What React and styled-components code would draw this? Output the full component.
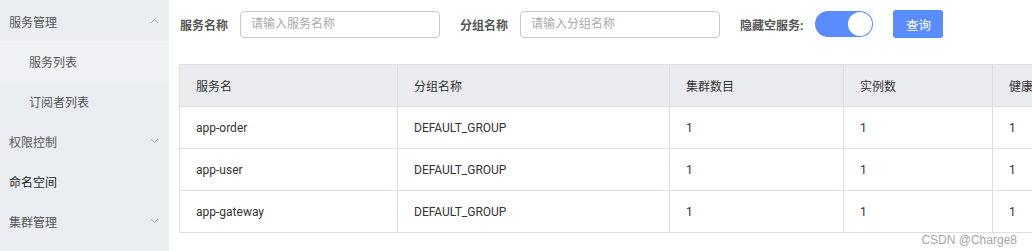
import styled, { createGlobalStyle } from "styled-components";

const GlobalStyle = createGlobalStyle`
  html, body {
    margin: 0;
    padding: 0;
    overflow: hidden;
    background: #fff;
    font-family: Roboto, "Noto Sans CJK SC", sans-serif;
    font-size: 12px;
    color: #333;
  }
`;

const Page = styled.div`
  position: relative;
  display: flex;
  width: 100vw;
  height: 100vh;
  overflow: hidden;
`;

const Sidebar = styled.aside`
  flex: 0 0 169px;
  background: #eaedf1;
  padding-top: 1px;
  box-sizing: border-box;
`;

const MenuItem = styled.div`
  display: flex;
  align-items: center;
  justify-content: space-between;
  height: 40px;
  padding: 0 10px 0 ${({ $sub }) => ($sub ? "29px" : "9px")};
  background: ${({ $active }) => ($active ? "#f0f2f5" : "transparent")};
  color: ${({ $strong }) => ($strong ? "#1f1f1f" : "#555")};
  font-size: 12px;
`;

const Chevron = ({ up }) => (
  <svg width="9" height="6" viewBox="0 0 9 6">
    <polyline
      points={up ? "1,5 4.5,1.5 8,5" : "1,1 4.5,4.5 8,1"}
      fill="none"
      stroke="#9aa0aa"
      strokeWidth="1"
    />
  </svg>
);

const Main = styled.main`
  flex: 1;
  min-width: 0;
  padding: 10px 0 0 10px;
  overflow: hidden;
`;

const SearchBar = styled.div`
  display: flex;
  align-items: center;
  height: 28px;
`;

const Label = styled.span`
  font-weight: bold;
  color: #555;
  margin: 0 12px 0 1px;
  white-space: nowrap;
`;

const Input = styled.input`
  box-sizing: border-box;
  width: 200px;
  height: 27px;
  border: 1px solid #c8cad2;
  border-radius: 4px;
  padding: 0 10px;
  margin-right: 19px;
  font-family: inherit;
  font-size: 12px;
  outline: none;

  &::placeholder {
    color: #aaa;
  }
`;

const Switch = styled.div`
  position: relative;
  width: 58px;
  height: 26px;
  border-radius: 13px;
  background: #5b8cff;
  margin-right: 20px;

  &::after {
    content: "";
    position: absolute;
    top: 1px;
    right: 1px;
    width: 24px;
    height: 24px;
    border-radius: 50%;
    background: #fff;
  }
`;

const Button = styled.button`
  width: 50px;
  height: 28px;
  border: none;
  border-radius: 3px;
  background: #5a8cff;
  color: #fff;
  font-family: inherit;
  font-size: 12.5px;
  padding: 0;
`;

const Table = styled.table`
  margin-top: 26px;
  border-collapse: collapse;
  table-layout: fixed;
  width: 1000px;
  border: 1px solid #dcdfe6;
`;

const Th = styled.th`
  height: 41px;
  padding: 0 16px;
  background: #eaecf0;
  border: 1px solid #dcdfe6;
  text-align: left;
  font-weight: normal;
  color: #333;
  white-space: nowrap;
  overflow: hidden;
`;

const Td = styled.td`
  height: 41px;
  padding: 0 16px;
  border: 1px solid #dcdfe6;
  color: #333;
  white-space: nowrap;
  overflow: hidden;
`;

const Watermark = styled.div`
  position: absolute;
  right: 15px;
  bottom: 4px;
  font-family: "Liberation Sans", sans-serif;
  font-size: 12px;
  color: #a6a6a6;
  text-shadow: 0 0 1px #fff;
`;

const columns = [
  { title: "服务名", width: 218 },
  { title: "分组名称", width: 272 },
  { title: "集群数目", width: 174 },
  { title: "实例数", width: 149 },
  { title: "健康实例数", width: 187 },
];

const rows = [
  ["app-order", "DEFAULT_GROUP", "1", "1", "1"],
  ["app-user", "DEFAULT_GROUP", "1", "1", "1"],
  ["app-gateway", "DEFAULT_GROUP", "1", "1", "1"],
];

export default function App() {
  return (
    <>
      <GlobalStyle />
      <Page>
        <Sidebar>
          <MenuItem>
            <span>服务管理</span>
            <Chevron up />
          </MenuItem>
          <MenuItem $sub $active>
            <span>服务列表</span>
          </MenuItem>
          <MenuItem $sub>
            <span>订阅者列表</span>
          </MenuItem>
          <MenuItem>
            <span>权限控制</span>
            <Chevron />
          </MenuItem>
          <MenuItem $strong>
            <span>命名空间</span>
          </MenuItem>
          <MenuItem>
            <span>集群管理</span>
            <Chevron />
          </MenuItem>
        </Sidebar>
        <Main>
          <SearchBar>
            <Label>服务名称</Label>
            <Input placeholder="请输入服务名称" />
            <Label>分组名称</Label>
            <Input placeholder="请输入分组名称" />
            <Label>隐藏空服务:</Label>
            <Switch />
            <Button>查询</Button>
          </SearchBar>
          <Table>
            <colgroup>
              {columns.map((c) => (
                <col key={c.title} style={{ width: c.width }} />
              ))}
            </colgroup>
            <thead>
              <tr>
                {columns.map((c) => (
                  <Th key={c.title}>{c.title}</Th>
                ))}
              </tr>
            </thead>
            <tbody>
              {rows.map((r) => (
                <tr key={r[0]}>
                  {r.map((v, i) => (
                    <Td key={i}>{v}</Td>
                  ))}
                </tr>
              ))}
            </tbody>
          </Table>
        </Main>
        <Watermark>CSDN @Charge8</Watermark>
      </Page>
    </>
  );
}
